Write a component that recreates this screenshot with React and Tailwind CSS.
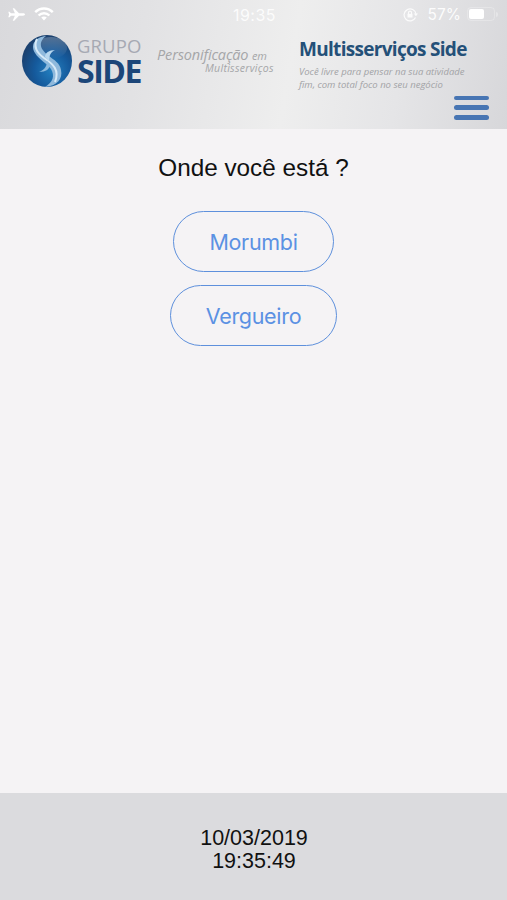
import React from 'react';

const locations = ['Morumbi', 'Vergueiro'];

const StatusBar = () => (
  <div className="flex h-7 items-center text-white">
    <div className="flex flex-1 items-center gap-[9px] pl-2">
      <svg className="h-[13px] w-[17px]" viewBox="0 0 17 15" preserveAspectRatio="none" fill="currentColor">
        <path d="M17 7.5c0-.8-.9-1.300-2-1.300h-4L6.200.3H4.700l2.200 5.900H3L1.500 4.300H.3l.8 3.200-.8 3.200h1.200L3 8.800h3.900l-2.200 5.900h1.500L11 8.800h4c1.100 0 2-.5 2-1.300z" />
      </svg>
      <svg className="h-[14px] w-5" viewBox="0 0 20 14" fill="none" stroke="currentColor" strokeWidth="2.4">
        <path d="M1.2 5.2c5-5 12.600-5 17.600 0" />
        <path d="M4.600 8.500c3.100-3.100 7.700-3.100 10.800 0" />
        <path d="M10 13.500l-2.800-2.900c1.600-1.500 4-1.500 5.600 0z" fill="currentColor" stroke="none" />
      </svg>
    </div>
    <span className="pl-[3px] pt-px font-['Inter','Liberation_Sans',sans-serif] text-[16px] tracking-[0.5px] opacity-85">19:35</span>
    <div className="flex flex-1 items-center justify-end pr-[9px]">
      <svg className="mr-2.5 h-[15px] w-[15px] opacity-85" viewBox="0 0 15 15" fill="none" stroke="currentColor" strokeWidth="1.200">
        <path d="M12.500 10.500A6 6 0 1 1 13 7" />
        <path d="M10.800 6.500h4.200l-2.100 2.800z" fill="currentColor" stroke="none" />
        <rect x="4.500" y="6.800" width="5" height="3.700" fill="currentColor" stroke="none" />
        <path d="M5.500 7V5.700a1.500 1.500 0 0 1 3 0V7" />
      </svg>
      <span className="mr-[6px] pt-px font-['Inter','Liberation_Sans',sans-serif] text-[15.500px] opacity-90">57%</span>
      <div className="h-[14px] w-7 rounded-[4px] border border-white/25 p-px">
        <div className="h-full w-[15px] rounded-[2px] bg-white" />
      </div>
      <div className="ml-px h-[5px] w-[2px] rounded-r bg-white/30" />
    </div>
  </div>
);

const GlobeLogo = () => (
  <svg className="h-[54px] w-[52px] shrink-0" viewBox="0 0 52 54">
    <defs>
      <radialGradient id="globe" cx="0.6" cy="0.68" r="0.65">
        <stop offset="0%" stopColor="#2380c0" />
        <stop offset="55%" stopColor="#15599b" />
        <stop offset="100%" stopColor="#1b416f" />
      </radialGradient>
      <linearGradient id="shine" x1="0" y1="0" x2="0" y2="1">
        <stop offset="0%" stopColor="#ffffff" stopOpacity="0.25" />
        <stop offset="100%" stopColor="#ffffff" stopOpacity="0" />
      </linearGradient>
    </defs>
    <ellipse cx="26" cy="27" rx="25" ry="26" fill="url(#globe)" />
    <ellipse cx="30" cy="14" rx="16" ry="11" fill="url(#shine)" />
    {/* upper and lower ribbons of the S */}
    <path d="M25 2C14 3 9 11 14 19c4 7 12 10 16 16 4 7 2 13-6 18 12-1 18-8 16-17-1-7-7-10-12-14C20 16 16 9 25 2z" fill="#8fb9dc" />
    <path d="M16 5c-4 8 0 14 7 19 9 6 16 12 11 24" fill="none" stroke="#d7eaf8" strokeWidth="2" />
    <path d="M34 16c-6 0-10 3-10 7l4 4c0-6 2-9 6-11z" fill="#b7d7ef" />
    <path d="M18 38c7 0 11-3 11-8l-3-3c0 6-3 9-8 11z" fill="#8bb9dd" />
  </svg>
);

const Header = () => (
  <header className="h-[129px] bg-[linear-gradient(100deg,#d9d9dc_0%,#e2e2e4_28%,#eeeeee_57%,#e5e5e7_78%,#d7d7da_100%)] font-['Open_Sans','Noto_Sans',sans-serif]">
    <StatusBar />
    <div className="flex items-start pl-[21px] pt-[6px]">
      <GlobeLogo />
      <div className="w-[84px] pl-1">
        <div className="text-[18.500px] leading-[24px] tracking-[0.1px] text-[#a6a9b3]">GRUPO</div>
        <div className="text-[32px] font-bold leading-[25px] tracking-[-1.500px] text-[#1c4679]">SIDE</div>
      </div>
      <div className="w-[142px] whitespace-nowrap pt-[13px] italic text-[#a5a6a8]">
        <div className="text-[14.500px] leading-[15px] tracking-[-0.15px]">
          Personificação <span className="text-[11px]">em</span>
        </div>
        <div className="pl-[48px] text-[10.500px] leading-[10px] tracking-[0.3px]">Multisserviços</div>
      </div>
      <div className="w-[190px] whitespace-nowrap pt-[4px]">
        <div className="text-[19px] font-bold leading-[22px] tracking-[-0.700px] text-[#245078]">Multisserviços Side</div>
        <div className="pt-[5px] text-[9.500px] italic leading-[13px] text-[#a2a3a6]">
          <div>Você livre para pensar na sua atividade</div>
          <div>fim, com total foco no seu negócio</div>
        </div>
        <button className="ml-auto mt-[5px] flex w-[35px] flex-col gap-[5px]" aria-label="Menu">
          <span className="h-[4px] w-full rounded-full bg-[#4775b3]" />
          <span className="h-[5px] w-full rounded-full bg-[#4775b3]" />
          <span className="h-[5px] w-full rounded-full bg-[#4775b3]" />
        </button>
      </div>
    </div>
  </header>
);

const App = () => (
  <div className="flex h-[900px] w-[507px] flex-col overflow-hidden bg-[#f5f3f5] font-['Liberation_Sans',Arial,sans-serif]">
    <Header />
    <main className="flex flex-1 flex-col items-center pt-[25px]">
      <h1 className="text-[24.300px] leading-[28px] text-[#111]">Onde você está ?</h1>
      <div className="mt-[29px] flex flex-col items-center gap-[13px]">
        {locations.map(name => (
          <button
            key={name}
            className="h-[61px] rounded-full border border-[#5e90dc] px-[35px] pt-[2px] font-['Inter','Liberation_Sans',sans-serif] text-[21.500px] tracking-[-0.300px] text-[#5b91e3]"
          >
            {name}
          </button>
        ))}
      </div>
    </main>
    <footer className="flex h-[107px] flex-col items-center justify-center bg-[#dbdbde] pl-px pt-[7px] text-[21.500px] leading-[23px] text-[#111]">
      <div>10/03/2019</div>
      <div>19:35:49</div>
    </footer>
  </div>
);

export default App;
